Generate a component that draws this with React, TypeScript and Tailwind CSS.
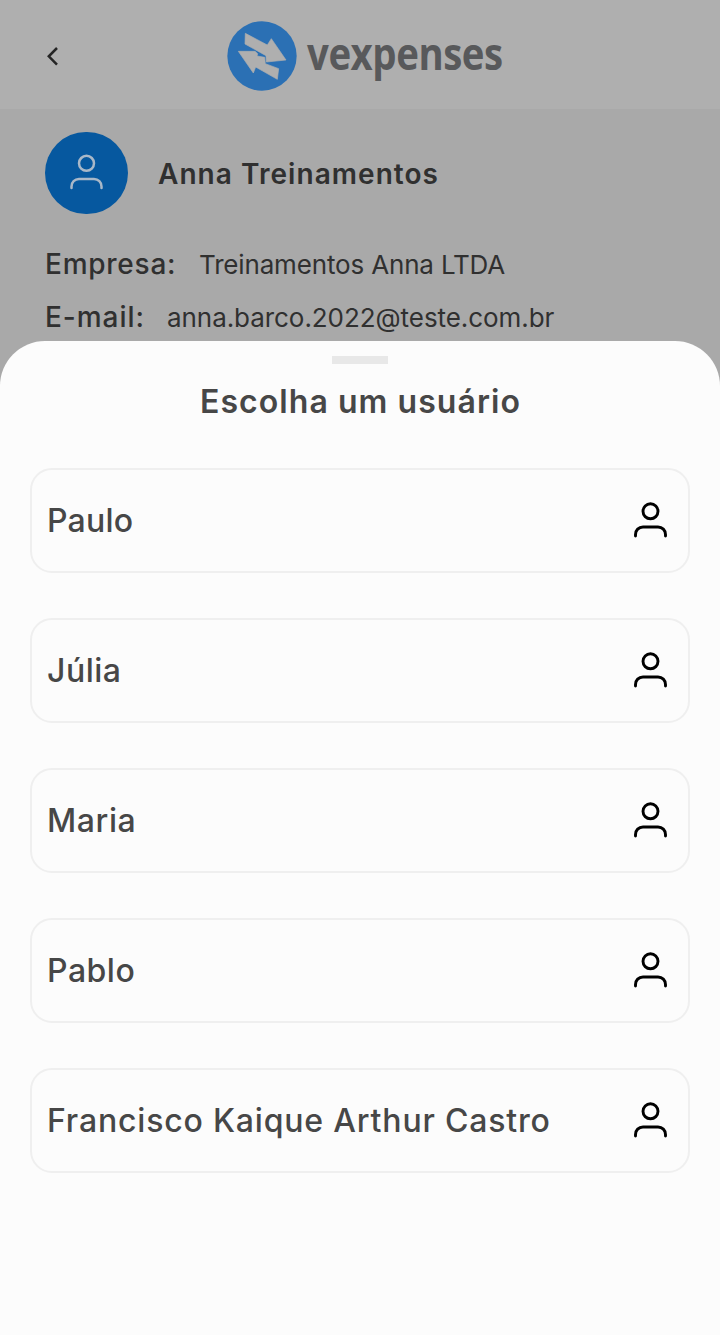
const users = [
  { name: 'Paulo', tracking: 'tracking-[0.2px]' },
  { name: 'Júlia', tracking: 'tracking-[0.5px]' },
  { name: 'Maria', tracking: 'tracking-[0.6px]' },
  { name: 'Pablo', tracking: 'tracking-[0.5px]' },
  { name: 'Francisco Kaique Arthur Castro', tracking: 'tracking-[0.82px]' },
];

function UserIcon({ className, strokeWidth }: { className: string; strokeWidth: number }) {
  return (
    <svg viewBox="0 0 36 38" className={className} fill="none" stroke="currentColor" strokeWidth={strokeWidth} strokeLinecap="round">
      <circle cx="17.5" cy="9.3" r="7.5" />
      <path d="M2.5 34v-1.5c0-4.3 3.2-7.5 7.5-7.5h15c4.3 0 7.5 3.2 7.5 7.5v1.5" />
    </svg>
  );
}

function Logo() {
  return (
    <div className="flex items-center">
      <svg viewBox="0 0 210 210" className="size-[70px] shrink-0">
        <circle cx="105" cy="105" r="104" fill="#2b70b4" />
        <g fill="#afafaf" stroke="#afafaf" strokeWidth="2" strokeLinejoin="round">
          <path d="M55 37 121 72 133 53 177 117 118 123 117 104 54 69Z" />
          <path d="M34 91 84 91 92 98 90 105 113 109 115 128 155 143 151 175 86 138 79 156Z" />
        </g>
      </svg>
      <span className="ml-[10px] block w-[196px] origin-left scale-x-[0.872] -translate-y-[3px] whitespace-nowrap font-['Open_Sans',sans-serif] text-[44px] font-bold leading-[60px] tracking-[-0.5px] text-[#58595b]">
        vexpenses
      </span>
    </div>
  );
}

export default function App() {
  return (
    <div className="flex h-[1335px] w-[720px] flex-col overflow-hidden bg-[#a9a9a9] font-['Inter',sans-serif] text-[#303030]">
      <header className="flex h-[109px] shrink-0 items-center bg-[#afafaf] pt-[3px]">
        <svg viewBox="0 0 20 24" className="ml-[43px] mr-[164px] h-6 w-5 shrink-0" fill="none" stroke="#252525" strokeWidth="2.5">
          <path d="M14 4 5.8 12.3l8.2 8.3" />
        </svg>
        <Logo />
      </header>
      <section className="flex h-[232px] shrink-0 flex-col pl-[45px]">
        <div className="mt-[23px] flex h-[82px] items-center">
          <div className="flex h-[82px] w-[83px] items-center justify-center rounded-full bg-[#06589f]">
            <UserIcon className="h-[38px] w-9 text-[#a9b8c8]" strokeWidth={2.5} />
          </div>
          <h1 className="ml-[30px] whitespace-nowrap pt-[2px] text-[28px] font-semibold leading-9 tracking-[1.05px]">Anna Treinamentos</h1>
        </div>
        <dl className="mt-6 whitespace-nowrap text-[26px] leading-[53px]">
          <div className="flex h-[53px] items-center">
            <dt className="w-[154px] text-[28px] font-medium tracking-[0.75px]">Empresa:</dt>
            <dd className="tracking-[-0.16px]">Treinamentos Anna LTDA</dd>
          </div>
          <div className="flex h-[53px] items-center">
            <dt className="w-[122px] text-[28px] font-medium tracking-[0.95px]">E-mail:</dt>
            <dd className="tracking-[-0.06px]">anna.barco.2022@teste.com.br</dd>
          </div>
        </dl>
      </section>
      <main className="flex flex-1 flex-col rounded-t-[45px] bg-[#fcfcfc] px-[30px] text-[#474747]">
        <div className="mx-auto mt-[15px] h-2 w-14 shrink-0 bg-[#e8e8e8]" />
        <h2 className="mt-[17px] whitespace-nowrap pl-px text-center text-[32px] font-semibold leading-[42px] tracking-[1.05px]">Escolha um usuário</h2>
        <ul className="mt-[45px] flex flex-col gap-[45px]">
          {users.map(({ name, tracking }) => (
            <li key={name} className="flex h-[105px] items-center justify-between rounded-[22px] border-2 border-[#efefef] pl-[15px] pr-[19px]">
              <span className={`whitespace-nowrap text-[32px] font-medium leading-[42px] ${tracking}`}>{name}</span>
              <UserIcon className="h-[38px] w-9 text-black" strokeWidth={2.9} />
            </li>
          ))}
        </ul>
      </main>
    </div>
  );
}
